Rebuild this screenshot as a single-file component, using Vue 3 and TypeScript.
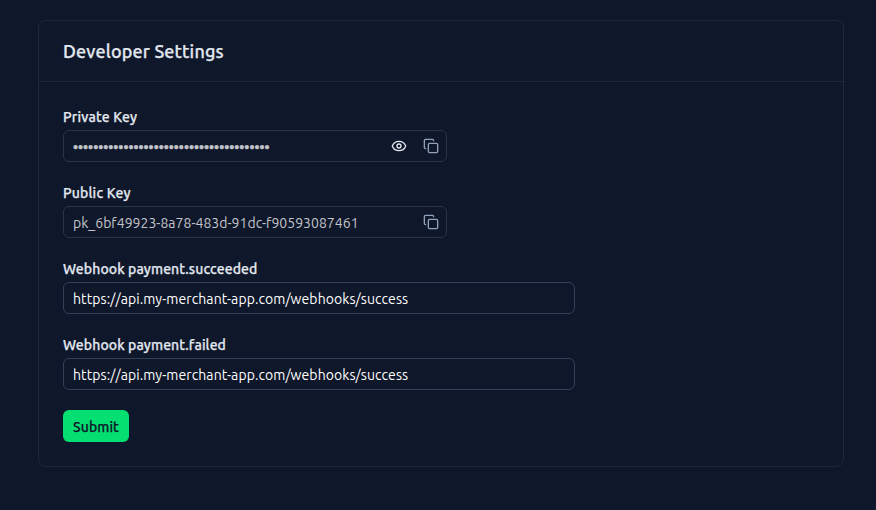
<script setup lang="ts">
import { ref } from 'vue'

const privateKey = ref('sk_4c1d7e92-5b36-4f0a-8e27-a3c95d1806bf')
const publicKey = ref('pk_6bf49923-8a78-483d-91dc-f90593087461')
const succeededUrl = ref('https://api.my-merchant-app.com/webhooks/success')
const failedUrl = ref('https://api.my-merchant-app.com/webhooks/success')
const revealed = ref(false)

function copy(value: string): void {
  navigator.clipboard?.writeText(value)
}
</script>

<template>
  <main class="page">
    <section class="card">
      <header class="card-header">
        <h1 class="title">Developer Settings</h1>
      </header>
      <form class="card-body" @submit.prevent>
        <div class="field">
          <label class="label key-label" for="private">Private Key</label>
          <div class="control narrow">
            <input id="private" class="input secret" :class="{ masked: !revealed }" :type="revealed ? 'text' : 'password'" :value="privateKey" disabled />
            <button class="icon-button" type="button" aria-label="Show key" @click="revealed = !revealed">
              <svg class="eye" viewBox="0 0 24 24">
                <path d="M2.062 12.348a1 1 0 0 1 0-.696a10.75 10.75 0 0 1 19.876 0a1 1 0 0 1 0 .696a10.75 10.75 0 0 1-19.876 0" />
                <circle cx="12" cy="12" r="3" />
              </svg>
            </button>
            <button class="icon-button" type="button" aria-label="Copy key" @click="copy(privateKey)">
              <svg class="copy" viewBox="0 0 24 24">
                <rect x="8" y="8" width="14" height="14" rx="2" />
                <path d="M4 16c-1.1 0-2-.9-2-2V4c0-1.1.9-2 2-2h10c1.1 0 2 .9 2 2" />
              </svg>
            </button>
          </div>
        </div>
        <div class="field">
          <label class="label key-label" for="public">Public Key</label>
          <div class="control narrow">
            <input id="public" class="input secret key" type="text" :value="publicKey" disabled />
            <button class="icon-button" type="button" aria-label="Copy key" @click="copy(publicKey)">
              <svg class="copy" viewBox="0 0 24 24">
                <rect x="8" y="8" width="14" height="14" rx="2" />
                <path d="M4 16c-1.1 0-2-.9-2-2V4c0-1.1.9-2 2-2h10c1.1 0 2 .9 2 2" />
              </svg>
            </button>
          </div>
        </div>
        <div class="field">
          <label class="label" for="succeeded">Webhook payment.succeeded</label>
          <div class="control wide">
            <input id="succeeded" v-model="succeededUrl" class="input url" type="text" spellcheck="false" />
          </div>
        </div>
        <div class="field">
          <label class="label" for="failed">Webhook payment.failed</label>
          <div class="control wide">
            <input id="failed" v-model="failedUrl" class="input url" type="text" spellcheck="false" />
          </div>
        </div>
        <button class="submit" type="submit">Submit</button>
      </form>
    </section>
  </main>
</template>

<style>
body {
  background: #0f172a;
}
</style>

<style scoped>
.page {
  box-sizing: border-box;
  min-height: 510px;
  padding: 20px 32px 43px 38px;
  background: #0f172a;
  font-family: Ubuntu, 'Noto Sans', sans-serif;
}
.card {
  border: 1px solid #1d293b;
  border-radius: 8px;
}
.card-header {
  padding: 16px 24px;
  border-bottom: 1px solid #1d293b;
}
.title {
  margin: 0;
  font-size: 18px;
  line-height: 28px;
  font-weight: 500;
  letter-spacing: 0.15px;
  color: #e2e8f0;
  -webkit-text-stroke: 0.25px currentColor;
}
.card-body {
  display: flex;
  flex-direction: column;
  align-items: flex-start;
  gap: 20px;
  padding: 24px;
}
.field {
  display: flex;
  flex-direction: column;
  gap: 4px;
}
.label {
  height: 20px;
  font-size: 14px;
  line-height: 22px;
  font-weight: 500;
  letter-spacing: 0.1px;
  color: #e2e8f0;
  -webkit-text-stroke: 0.25px currentColor;
}
.key-label {
  letter-spacing: 0.19px;
}
.control {
  box-sizing: border-box;
  display: flex;
  align-items: center;
  height: 32px;
  padding: 0 7px 0 9px;
  border: 1px solid #314158;
  border-radius: 6px;
}
.narrow {
  width: 384px;
  border-color: #283649;
}
.wide {
  width: 512px;
}
.input {
  flex: 1;
  min-width: 0;
  padding: 0;
  border: 0;
  outline: 0;
  background: transparent;
  font-family: inherit;
  font-size: 14px;
  line-height: 20px;
  color: #fff;
}
.url {
  padding-top: 2px;
  letter-spacing: 0.085px;
}
.secret {
  color: #c3c5ca;
}
.masked {
  padding-top: 2px;
  -webkit-text-stroke: 0.6px currentColor;
}
.key {
  padding-top: 2px;
  letter-spacing: 0.03px;
}
.icon-button {
  display: flex;
  margin-left: 16px;
  padding: 0;
  border: 0;
  background: transparent;
}
svg {
  width: 16px;
  height: 16px;
  fill: none;
  stroke: currentColor;
  stroke-width: 2;
  stroke-linecap: round;
  stroke-linejoin: round;
}
.eye {
  color: #e2e8f0;
}
.copy {
  color: #90a1b9;
}
.submit {
  width: 66px;
  height: 32px;
  padding: 2px 0 0;
  border: 0;
  border-radius: 6px;
  background: #05df72;
  color: #0f172b;
  font-family: inherit;
  font-size: 14px;
  line-height: 20px;
  font-weight: 500;
  letter-spacing: 0.08px;
  -webkit-text-stroke: 0.25px currentColor;
}
</style>
